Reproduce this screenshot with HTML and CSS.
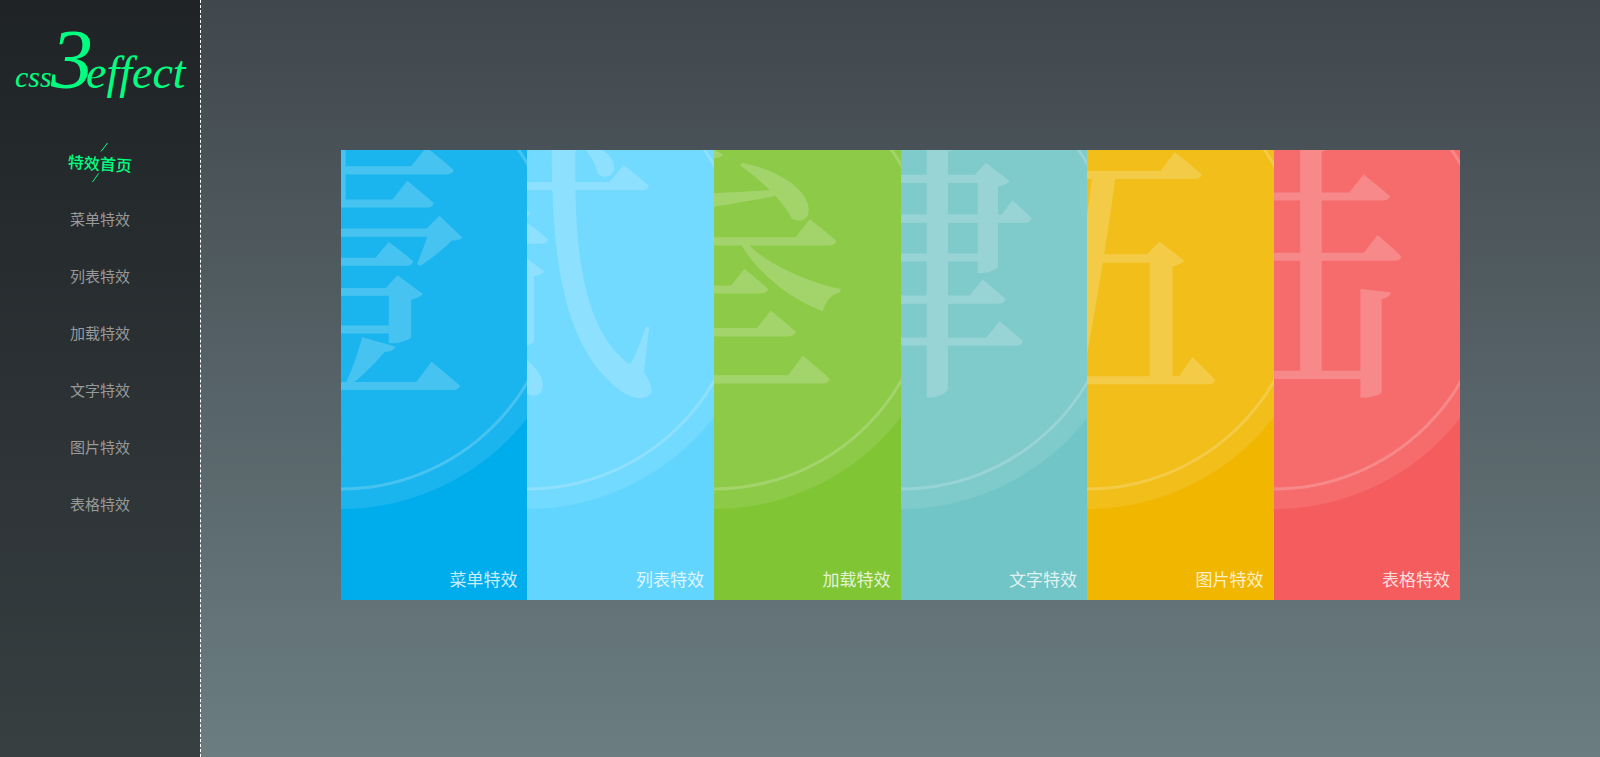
FILE: index.html
```html
<!DOCTYPE html>
<html lang="zh-CN">
<head>
<meta charset="utf-8">
<title>css3effect</title>
<link rel="stylesheet" href="styles.css">
</head>
<body>
<div class="layout">
  <aside class="sidebar">
    <a class="logo" href="#" aria-label="css3effect">
      <svg class="logo-art" viewBox="0 0 200 120">
        <text class="logo-small" x="15" y="87">css</text>
        <text class="logo-big" x="51" y="88">3</text>
        <text class="logo-word" x="86" y="88">effect</text>
      </svg>
    </a>
    <nav class="menu">
      <a class="menu-item active" href="#"><span class="half left">特效</span><span class="half right">首页</span>
        <svg class="slashes" viewBox="0 0 80 50" aria-hidden="true"><path d="M41 13.500L47.500 5M32.500 44L38.500 35.500"/></svg>
      </a>
      <a class="menu-item" href="#">菜单特效</a>
      <a class="menu-item" href="#">列表特效</a>
      <a class="menu-item" href="#">加载特效</a>
      <a class="menu-item" href="#">文字特效</a>
      <a class="menu-item" href="#">图片特效</a>
      <a class="menu-item" href="#">表格特效</a>
    </nav>
  </aside>
  <main class="content">
    <div class="panels">
      <a class="panel blue" href="#"><svg class="emblem" aria-hidden="true"><circle class="disc" cy="123" r="236"/><circle class="ring" cy="123" r="216"/><text class="numeral" x="-6" y="225">壹</text></svg><span class="label">菜单特效</span></a>
      <a class="panel sky" href="#"><svg class="emblem" aria-hidden="true"><circle class="disc" cy="123" r="236"/><circle class="ring" cy="123" r="216"/><text class="numeral" x="-6" y="225">贰</text></svg><span class="label">列表特效</span></a>
      <a class="panel green" href="#"><svg class="emblem" aria-hidden="true"><circle class="disc" cy="123" r="236"/><circle class="ring" cy="123" r="216"/><text class="numeral" x="-6" y="225">叁</text></svg><span class="label">加载特效</span></a>
      <a class="panel teal" href="#"><svg class="emblem" aria-hidden="true"><circle class="disc" cy="123" r="236"/><circle class="ring" cy="123" r="216"/><text class="numeral" x="-6" y="225">肆</text></svg><span class="label">文字特效</span></a>
      <a class="panel yellow" href="#"><svg class="emblem" aria-hidden="true"><circle class="disc" cy="123" r="236"/><circle class="ring" cy="123" r="216"/><text class="numeral" x="-6" y="225">伍</text></svg><span class="label">图片特效</span></a>
      <a class="panel red" href="#"><svg class="emblem" aria-hidden="true"><circle class="disc" cy="123" r="236"/><circle class="ring" cy="123" r="216"/><text class="numeral" x="-6" y="225">陆</text></svg><span class="label">表格特效</span></a>
    </div>
  </main>
</div>
</body>
</html>
```

FILE: styles.css
```css
* { box-sizing: border-box; }
body {
  margin: 0;
  font-family: "Noto Sans CJK SC", sans-serif;
}
a { text-decoration: none; }
.layout {
  display: flex;
  min-height: 100vh;
  background: linear-gradient(#40474d, #6b7d81);
}
.sidebar {
  flex: 0 0 201px;
  border-right: 1px dashed #fff;
  background: linear-gradient(#1f2326, #373f41) padding-box;
}
.logo { display: block; }
.logo-art { display: block; width: 200px; height: 120px; fill: #00ff80; }
.logo-art text {
  font-family: "Liberation Serif", serif;
  font-style: italic;
}
.logo-small { font-size: 30px; }
.logo-big { font-size: 84px; }
.logo-word { font-size: 46px; }
.menu {
  display: flex;
  flex-direction: column;
  padding-top: 14px;
}
.menu-item {
  position: relative;
  height: 57px;
  line-height: 56px;
  text-align: center;
  font-size: 15px;
  color: #999;
}
.active { font-size: 16px; font-weight: 500; color: #00ff80; }
.half { display: inline-block; }
.left { transform: rotate(4deg); }
.right { transform: translateY(2px) rotate(4deg); }
.slashes {
  position: absolute;
  left: 60px;
  top: 4px;
  width: 80px;
  height: 50px;
  fill: none;
  stroke: #00ff80;
}
.content {
  flex: 1;
  padding-top: 150px;
}
.panels { display: flex; width: 80%; height: 450px; margin: 0 auto; }
.panel {
  flex: 1;
  display: flex;
  flex-direction: column;
  color: #fff;
}
.emblem { flex: 1; width: 100%; min-height: 0; overflow: hidden; }
.disc { fill: rgba(255, 255, 255, 0.1); }
.ring { fill: none; stroke: rgba(255, 255, 255, 0.2); stroke-width: 3px; }
.numeral {
  font-family: "Noto Serif CJK SC", "Noto Sans CJK SC", serif;
  font-size: 280px;
  font-weight: 500;
  text-anchor: middle;
  fill: rgba(255, 255, 255, 0.2);
}
.label {
  padding: 0 10px;
  line-height: 42px;
  text-align: right;
  font-size: 17px;
  color: rgba(255, 255, 255, 0.8);
}
.blue { background: #00adec; }
.sky { background: #62d5ff; }
.green { background: #80c534; }
.teal { background: #71c5c6; }
.yellow { background: #f1b700; }
.red { background: #f55c5d; }
```
